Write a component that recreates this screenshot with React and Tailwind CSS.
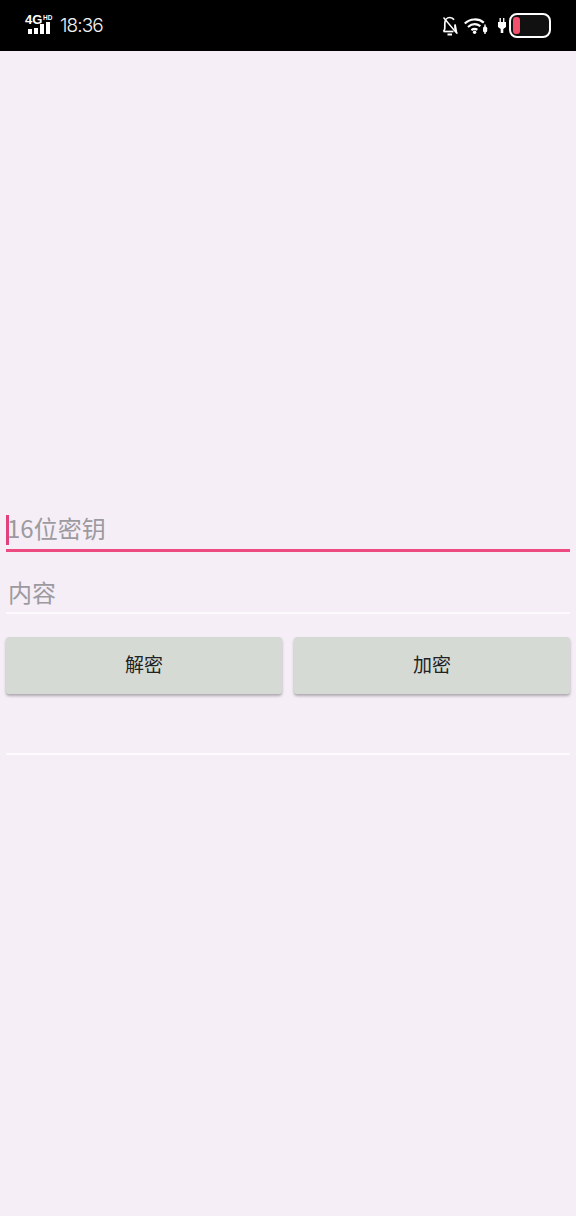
export default function App() {
  const cjk = 'font-["Noto_Sans_CJK_SC","Noto_Sans",sans-serif]';
  return (
    <div className="w-[576px] h-[1216px] bg-[#f5eef7] flex flex-col overflow-hidden">
      <div className="h-[51px] bg-black flex items-center justify-between text-white pl-[25px] pr-[25px] shrink-0">
        <div className="flex items-center gap-[8px]">
          <div className="relative w-[27px] h-[24px]">
            <span className="absolute left-0 top-[1px] text-[13px] leading-[10px] font-bold font-['Liberation_Sans',sans-serif]">4G</span>
            <span className="absolute left-[18px] top-[1px] text-[6.500px] leading-[6px] font-bold font-['Liberation_Sans',sans-serif]">HD</span>
            <div className="absolute left-[3px] bottom-[4px] flex items-end gap-[2px]">
              <div className="w-[4px] h-[5px] bg-white"></div>
              <div className="w-[4px] h-[6px] bg-white"></div>
              <div className="w-[4px] h-[10px] bg-white"></div>
              <div className="w-[4px] h-[12px] bg-white"></div>
            </div>
          </div>
          <span className="text-[19px] leading-none font-light tracking-[-0.9px] font-['Inter',sans-serif] text-[#f2f2f2]">18:36</span>
        </div>
        <div className="flex items-center">
          <svg width="18" height="20" viewBox="0 0 18 20" fill="none" stroke="white" strokeWidth="1.7" className="mr-[5px]">
            <path d="M2.500 15.500c.9-1 1.300-2 1.300-3.500V7.500C3.800 4 5.800 1.500 8.800 1.500c1.900 0 3.300.8 4.200 2.300M14 8.500V12c0 1.500.4 2.500 1.300 3.500z" />
            <path d="M2.500 15.500h10" />
            <path d="M6.500 18.500h4.500" strokeWidth="2" />
            <path d="M2.500 1.500l13.500 16" strokeWidth="1.400" />
          </svg>
          <svg width="25" height="16" viewBox="0 0 25 16" fill="none" stroke="white" strokeWidth="2.200" className="mr-[9px]">
            <path d="M0.800 5.500C6 0.400 14.500 0.200 19.800 4.600" />
            <path d="M4 9c3.800-3.200 8.600-3.400 12.400-.8" />
            <path d="M7.400 12.200c2-1.500 4-1.600 6-.5" />
            <circle cx="10.600" cy="14.300" r="1.700" fill="white" stroke="none" />
            <path d="M21 6.500v2.500M21 14v2" strokeWidth="1.400" />
            <rect x="19" y="8.500" width="4.200" height="6" rx="1.800" fill="white" stroke="none" />
          </svg>
          <svg width="8" height="15" viewBox="0 0 8 15" fill="white" className="mr-[3px]">
            <path d="M1.500 0h1.400v4H1.500zM5 0h1.400v4H5zM0 4h8v5L5.300 11v4H2.700v-4L0 9z" />
          </svg>
          <div className="w-[42px] h-[25px] rounded-[8px] border-2 border-white bg-[#111] p-[2px] flex">
            <div className="w-[7px] h-full rounded-[3px] bg-[#f2506c]"></div>
          </div>
        </div>
      </div>

      <div className={`flex flex-col px-[6px] pt-[462px] ${cjk}`}>
        <div className="relative h-[39px] border-b-[3px] border-[#ec4a80]">
          <span className="absolute left-[1px] top-[-2px] text-[24px] leading-[34px] text-[#9c9a9f] whitespace-nowrap">16位密钥</span>
          <div className="absolute left-0 top-[2px] w-[3px] h-[30px] bg-[#e0407c]"></div>
        </div>
        <div className="relative h-[62px] border-b-2 border-[#fdfafd]">
          <span className="absolute left-[2px] top-[23px] text-[24px] leading-[34px] text-[#9c9a9f]">内容</span>
        </div>
        <div className="flex gap-[12px] mt-[23px]">
          <button className="flex-1 h-[57px] pb-[3px] rounded-[3px] bg-[#d6dad5] text-[19px] text-[#222222] shadow-[0_2px_3px_rgba(0,0,0,0.3)]">解密</button>
          <button className="flex-1 h-[57px] pb-[3px] rounded-[3px] bg-[#d6dad5] text-[19px] text-[#222222] shadow-[0_2px_3px_rgba(0,0,0,0.3)]">加密</button>
        </div>
        <div className="h-[2px] bg-[#fdfafd] mt-[59px]"></div>
      </div>
    </div>
  );
}
